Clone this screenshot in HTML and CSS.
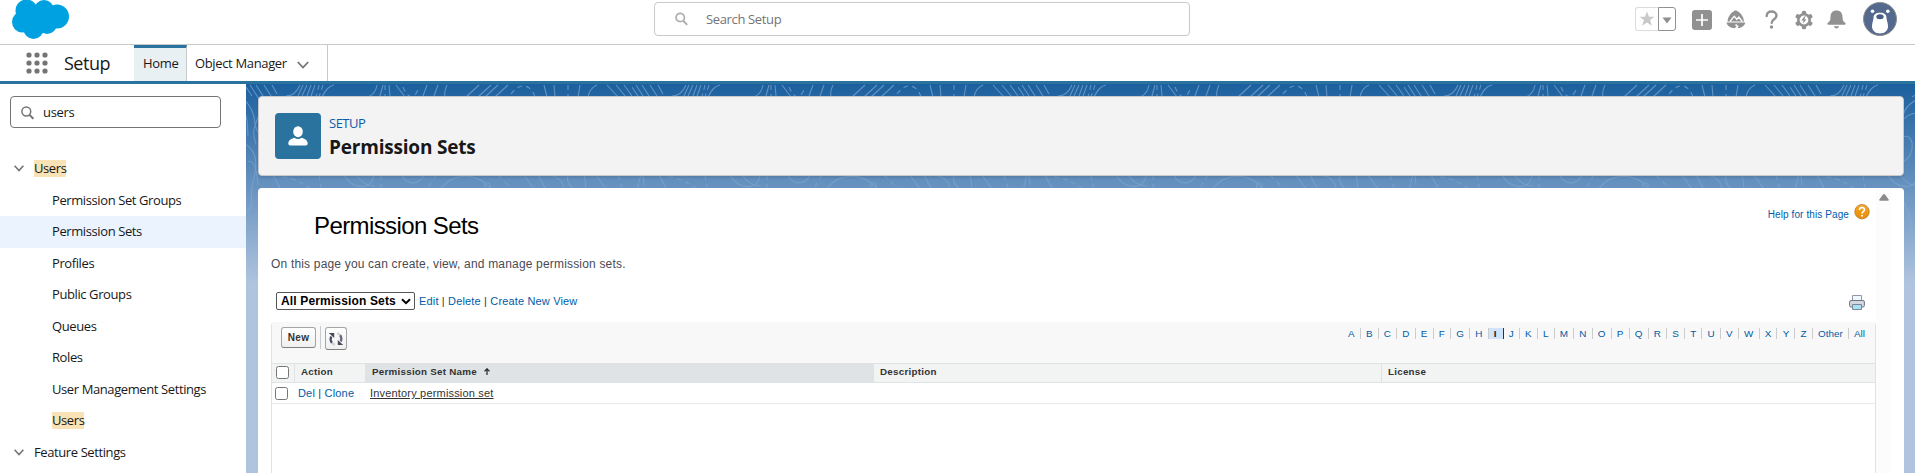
FILE: index.html
```html
<!DOCTYPE html>
<html lang="en">
<head>
<meta charset="utf-8">
<title>Permission Sets | Setup</title>
<link rel="stylesheet" href="styles.css">
</head>
<body>
<header class="top">
  <svg class="logo" width="60" height="40" viewBox="0 0 60 40" fill="#00a1e0"><circle cx="14.500" cy="10.500" r="11"/><circle cx="32" cy="10" r="10"/><circle cx="45" cy="16.500" r="12"/><circle cx="10.500" cy="22" r="10.500"/><circle cx="21.500" cy="29" r="10"/><circle cx="35" cy="24" r="10"/><path d="M10 8h30v20H14z"/></svg>
  <div class="global-search">
    <svg width="13" height="14" viewBox="0 0 13 14" fill="none" stroke="#aeaeae" stroke-width="1.700"><circle cx="5.200" cy="5.500" r="4.200"/><path d="M8.200 8.700l4 4.200" stroke-width="2"/></svg>
    <span>Search Setup</span>
  </div>
  <div class="actions">
    <div class="fav">
      <span class="fav-star"><svg width="16" height="16" viewBox="0 0 16 16" fill="#c9c9c9"><path d="M8 .5l2 5.200h5.500l-4.400 3.400 1.700 5.600L8 11.400l-4.800 3.300 1.700-5.600L.5 5.700H6z"/></svg></span>
      <span class="fav-menu"><svg width="10" height="7" viewBox="0 0 10 7" fill="#8f8f8f"><path d="M.5.500h9L5 6.500z"/></svg></span>
    </div>
    <svg class="i-add" width="20" height="20" viewBox="0 0 20 20"><rect width="20" height="20" rx="3" fill="#919191"/><path d="M10 4v12M4 10h12" stroke="#fff" stroke-width="1.700"/></svg>
    <svg class="i-trail" width="20" height="19" viewBox="0 0 20 19"><path d="M1.500 11.500C2 6 5.500 2 9.700.3c4.200 1.700 7.800 5.700 8.300 11.200z" fill="#919191"/><path d="M4 11.500l4.300-5.300 2.500 3.200 2-2.300 3.500 4.400" fill="none" stroke="#fff" stroke-width="1.300"/><path d="M.5 12.500h18.800c-.5 3.500-4 5.500-7.800 5.700l1.200-2.200-2.300-1.200 1.200-1.400-3 1.700 2 1.200-1.800 2C4.500 18 1 15.800.5 12.500z" fill="#919191"/></svg>
    <svg class="i-help" width="13" height="19" viewBox="0 0 13 19"><path d="M1.700 6C1.700 3 3.700 1.500 6.500 1.500s5 1.600 5 4.300c0 3.200-4.800 3.700-4.800 6.900" fill="none" stroke="#919191" stroke-width="2.400" stroke-linecap="round"/><circle cx="6.500" cy="17" r="1.700" fill="#919191"/></svg>
    <svg class="i-gear" width="18" height="20" viewBox="0 0 18 20"><g fill="#919191"><circle cx="9" cy="10" r="7"/><rect x="6.900" y=".8" width="4.200" height="18.400" rx="1.500"/><rect x="6.900" y=".8" width="4.200" height="18.400" rx="1.500" transform="rotate(60 9 10)"/><rect x="6.900" y=".8" width="4.200" height="18.400" rx="1.500" transform="rotate(120 9 10)"/></g><circle cx="9" cy="10" r="4.400" fill="#fff"/><path d="M9.500 6.200L6.300 10.500h2.200l-.6 3.300 3.500-4.500H9.200l1.500-3.100z" fill="#919191"/></svg>
    <svg class="i-bell" width="19" height="19" viewBox="0 0 19 19" fill="#919191"><path d="M9.500.5c3.900 0 6 2.700 6 6.200 0 3.300.6 4.700 2.600 6 .9.700.6 2-.4 2H1.300c-1 0-1.300-1.300-.4-2 2-1.300 2.600-2.700 2.600-6C3.500 3.200 5.600.5 9.500.5z"/><path d="M7 16.200h5c-.2 1.300-1.300 2.200-2.500 2.200S7.200 17.500 7 16.200z"/></svg>
    <svg class="i-user" width="34" height="34" viewBox="0 0 34 34"><circle cx="17" cy="17" r="16.500" fill="#54698d" stroke="#8d8d8f"/><circle cx="9.500" cy="9.300" r="1.800" fill="#fff"/><circle cx="24.800" cy="9.300" r="1.800" fill="#fff"/><path d="M17 10.800c4.500 0 6.500 2 6.500 5 0 3 1.500 5 1.500 8.500 0 4.700-3.500 7.200-8 7.200s-8-2.500-8-7.200c0-3.500 1.500-5.500 1.500-8.500 0-3 2-5 6.500-5z" fill="#fff"/><ellipse cx="17" cy="14.700" rx="3.700" ry="2.500" fill="#4a5f86"/></svg>
  </div>
</header>
<nav class="nav">
  <svg class="waffle" width="22" height="22" viewBox="0 0 22 22" fill="#747474"><circle cx="3" cy="3" r="2.600"/><circle cx="11" cy="3" r="2.600"/><circle cx="19" cy="3" r="2.600"/><circle cx="3" cy="11" r="2.600"/><circle cx="11" cy="11" r="2.600"/><circle cx="19" cy="11" r="2.600"/><circle cx="3" cy="19" r="2.600"/><circle cx="11" cy="19" r="2.600"/><circle cx="19" cy="19" r="2.600"/></svg>
  <span class="app">Setup</span>
  <a class="tab tab-on">Home</a>
  <a class="tab tab-om"><span>Object Manager</span><svg width="12" height="8" viewBox="0 0 12 8" fill="none" stroke="#747474" stroke-width="1.800"><path d="M.8 1L6 6.500 11.200 1"/></svg></a>
</nav>
<div class="body">
  <aside class="side">
    <div class="quick"><svg width="13" height="14" viewBox="0 0 13 14" fill="none" stroke="#747474" stroke-width="1.500"><circle cx="5.300" cy="5.500" r="4.400"/><path d="M8.500 8.900l3.900 4" stroke-width="2"/></svg><span>users</span></div>
    <ul class="tree">
      <li class="parent"><svg width="10" height="7" viewBox="0 0 10 7" fill="none" stroke="#747474" stroke-width="1.600"><path d="M.6.800L5 5.500 9.400.8"/></svg><mark>Users</mark></li>
      <li>Permission Set Groups</li>
      <li class="on">Permission Sets</li>
      <li>Profiles</li>
      <li>Public Groups</li>
      <li>Queues</li>
      <li>Roles</li>
      <li>User Management Settings</li>
      <li><mark class="leaf">Users</mark></li>
      <li class="parent"><svg width="10" height="7" viewBox="0 0 10 7" fill="none" stroke="#747474" stroke-width="1.600"><path d="M.6.800L5 5.500 9.400.8"/></svg><span>Feature Settings</span></li>
    </ul>
  </aside>
  <main class="main">
    <svg class="topo" width="1669" height="200">
      <defs>
        <linearGradient id="fade" x1="0" y1="0" x2="0" y2="1"><stop offset="0" stop-color="#fff" stop-opacity="1"/><stop offset="1" stop-color="#fff" stop-opacity=".35"/></linearGradient>
        <pattern id="lines" width="386" height="200" patternUnits="userSpaceOnUse">
          <g fill="none" stroke="#8db4dc" stroke-opacity=".6" stroke-width="1.100">
            <path d="M0 3l6 9M4 1l9 14M10 1l9 14M18 1l7 11M26 1l5 9M54 1c-3 7-8 11-14 11M57 1l-5 11M61 1l-5 11M65 1l-4 11M69 1l-4 11M88 1C82 2 79 7 76 13M131 1c-1 6-4 10-9 12M137 1l-3 11M143 1l1 11M150 1l9 12M181 1l-4 11M192 1l-4 11M201 1c-2 4-3 8-2 12M233 1l-13 12M245 1l-13 12M252 1l-13 12M262 1l-13 12M298 1l3 12M308 1l1 12M334 1l-2 12M351 1c-5 2-8 7-9 12M361 1l11 12M370 1l10 12M378 1l8 11"/>
            <path stroke-dasharray="5 4" d="M73 1l-3 12M77 1l-4 12M139 1v12M157 3c6 14 12 12 16 0M265 10c10-13 20-9 24 3M322 1v12"/>
            <path d="M-2 15c7 8 10 14 11 24s5 9 6 18M-2 28c5 7 3 14 4 24M14 29c-5 12-9 18-4 31M-1 60c12 6 13 20 8 38s4 23-8 31M2 77c8 0 9 13 10 24M0 142c12 0 13 19 0 26M2 181c7 2 9 9 10 14"/>
            <path d="M27 91l7 13M98 91c7 14 28 17 30 0M156 91c4 10 17 11 22 0M195 104c13-16 37-15 49 0M200 91c12-3 29 2 34 5M239 104c-3-7 7-7 5 0M278 91l10 14M292 91l7 13M304 91c9 2 13 7 14 13M322 91c-2 7 2 10 5 14M338 91c2 7 1 10 2 14M350 91l10 14"/>
            <path stroke-dasharray="5 4" d="M36 93c12 1 16 4 28 11M73 91l2 13M135 91v13M190 91l-8 13M252 91l13 13M372 91l4 13"/>
            <path d="M130 14c-11 5-16 11-17 18M126 29c-7 1-12 5-15 9M112 53c8-3 11 4 10 12s-8 14-12 13M111 92c5 7 10 10 18 10M113 115c5 16 11 25 9 40s-10 12-14 20M112 185c3-6 10-6 14-2"/>
          </g>
        </pattern>
        <mask id="m"><rect width="1669" height="200" fill="url(#fade)"/></mask>
      </defs>
      <rect width="1669" height="200" fill="url(#lines)" mask="url(#m)"/>
    </svg>
    <section class="card head">
      <span class="avatar"><svg width="20" height="20" viewBox="0 0 20 20" fill="#fff"><ellipse cx="10" cy="5.700" rx="4.800" ry="5.500"/><path d="M.3 17.500C.3 14 4 12.400 6.500 11.700c2 1.700 5 1.700 7 0 2.500.7 6.200 2.300 6.200 5.800 0 1.300-.8 2-2 2H2.300c-1.200 0-2-.7-2-2z"/></svg></span>
      <div class="titles"><span class="eyebrow">SETUP</span><h1>Permission Sets</h1></div>
    </section>
    <section class="card content">
      <div class="frame">
        <div class="title-row">
          <h2>Permission Sets</h2>
          <a class="help"><span>Help for this Page</span><svg width="16" height="16" viewBox="0 0 16 16"><defs><linearGradient id="og" x1="0" y1="0" x2="0" y2="1"><stop offset="0" stop-color="#f0b040"/><stop offset=".45" stop-color="#ee9b12"/><stop offset="1" stop-color="#e88a08"/></linearGradient></defs><circle cx="8" cy="7.700" r="7.200" fill="url(#og)" stroke="#b97a25" stroke-width=".8"/><path d="M5.500 6c0-3.300 5-3.300 5-.3 0 1.800-2.500 1.900-2.500 3.800" fill="none" stroke="#fff" stroke-width="1.600"/><circle cx="8" cy="11.700" r="1" fill="#fff"/></svg></a>
        </div>
        <p class="intro">On this page you can create, view, and manage permission sets.</p>
        <div class="views">
          <div class="select"><span>All Permission Sets</span><svg width="10" height="7" viewBox="0 0 10 7" fill="none" stroke="#000" stroke-width="2"><path d="M1 1.200l4 4 4-4"/></svg></div>
          <span class="links"><a>Edit</a> | <a>Delete</a> | <a>Create New View</a></span>
          <svg class="print" width="16" height="15" viewBox="0 0 16 15"><path d="M3.500 5.500v-5h9v5" fill="#eef9fd" stroke="#8e98a8"/><rect x=".6" y="5.500" width="14.800" height="6.500" rx="1.500" fill="#d5d7de" stroke="#6f7480"/><path d="M3.500 9.500h9v5h-9z" fill="#a9e0f4" stroke="#7a8596"/></svg>
        </div>
        <div class="list">
          <div class="tools">
            <span class="btn new">New</span><i class="sep"></i>
            <span class="btn refresh"><svg width="16" height="14" viewBox="0 0 16 14" fill="none" stroke-width="2.200"><path d="M3.200 4.500C2.300 6.500 2.500 9 4 11" stroke="#4a4a5c"/><path d="M12.800 9.500c.9-2 .7-4.500-.8-6.500" stroke="#6a6a78"/><path d="M4 11c.8.900 1.800 1.400 3 1.600M12 3c-.8-.9-1.800-1.400-3-1.600" stroke="#d2d2d6"/><path d="M.8 1h5.400v5zM15.200 13H9.800V8z" fill="#4a4a5c"/></svg></span>
            <div class="rolodex"><a>A</a><a>B</a><a>C</a><a>D</a><a>E</a><a>F</a><a>G</a><a>H</a><a class="cur">I</a><a>J</a><a>K</a><a>L</a><a>M</a><a>N</a><a>O</a><a>P</a><a>Q</a><a>R</a><a>S</a><a>T</a><a>U</a><a>V</a><a>W</a><a>X</a><a>Y</a><a>Z</a><a>Other</a><a>All</a></div>
          </div>
          <div class="row th"><span class="c1"><i class="box"></i></span><span class="act">Action</span><span class="sorted">Permission Set Name<svg width="6" height="7" viewBox="0 0 6 7" fill="none" stroke="#222" stroke-width="1.200"><path d="M3 7V1M.5 3.300L3 .8l2.500 2.500"/></svg></span><span class="desc">Description</span><span class="lic">License</span></div>
          <div class="row td"><span class="c1"><i class="box"></i></span><span class="act"><a>Del</a> | <a>Clone</a></span><span class="name"><u>Inventory permission set</u></span></div>
        </div>
      </div>
      <div class="scroll"><svg width="10" height="7" viewBox="0 0 10 7" fill="#8b8b8b"><path d="M4 .5q1-1 2 0l3.700 5q.5 1.300-1 1.300H1.300q-1.500 0-1-1.300z"/></svg></div>
    </section>
  </main>
</div>
</body>
</html>
```
FILE: styles.css
```css
* { box-sizing: border-box; }
body { margin: 0; height: 473px; overflow: hidden; background: #fff; color: #181818; font: 13px/18px "Open Sans", "Noto Sans", sans-serif; display: flex; flex-direction: column; }
svg { display: block; flex: none; }
.top { height: 45px; flex: none; border-bottom: 1px solid #c9c9c9; display: flex; align-items: flex-start; }
.logo { margin-left: 12px; margin-right: 582px; }
.global-search { width: 536px; height: 34px; margin-top: 2px; border: 1px solid #c9c9c9; border-radius: 4px; display: flex; align-items: center; padding-left: 20px; gap: 18px; color: #747474; letter-spacing: -.35px; }
.actions { margin-left: 445px; display: flex; align-items: flex-start; }
.fav { display: flex; width: 41px; height: 24px; margin-top: 7px; }
.fav span { display: flex; align-items: center; justify-content: center; }
.fav-star { width: 23px; border: 1px solid #dcdcdc; border-right: 0; border-radius: 3px 0 0 3px; }
.fav-menu { width: 18px; border: 1px solid #919191; border-radius: 0 3px 3px 0; padding-top: 3px; }
.i-add { margin: 10px 0 0 16px; }
.i-trail { margin: 10px 0 0 14px; }
.i-help { margin: 10px 0 0 19px; }
.i-gear { margin: 10px 0 0 17px; }
.i-bell { margin: 10px 0 0 14px; }
.i-user { margin: 2px 0 0 17px; }
.nav { height: 39px; flex: none; border-bottom: 3px solid #2a739e; display: flex; align-items: stretch; }
.waffle { margin: 7px 0 0 25.500px; }
.app { width: 70px; margin-left: 16.500px; font-size: 18px; line-height: 36px; letter-spacing: -.5px; }
.app, .tab { white-space: nowrap; }
.tab { line-height: 37px; letter-spacing: -.35px; }
.tab-on { width: 53px; background: #e9f0f4; border-top: 3px solid #2a739e; border-right: 1px solid #c9c9c9; padding-left: 9px; line-height: 31px; }
.tab-om { width: 141px; border-right: 1px solid #c9c9c9; display: flex; align-items: center; justify-content: space-between; padding: 0 18px 0 8px; }
.tab-om svg { margin-top: 3px; }
.body { flex: 1; display: flex; min-height: 0; }
.side { width: 246px; flex: none; padding-top: 12px; }
.quick { width: 211px; height: 32px; margin-left: 10px; border: 1px solid #747474; border-radius: 4px; display: flex; align-items: center; gap: 9px; padding-left: 10px; letter-spacing: -.3px; }
.quick svg { margin-top: 2px; }
.tree { list-style: none; margin: 25px 0 0; padding: 0; letter-spacing: -.4px; }
.tree li { height: 31.500px; line-height: 31px; padding-left: 52px; white-space: nowrap; }
.tree .parent { display: flex; align-items: center; padding-left: 14px; gap: 10px; }
.tree .on { background: #eaf3fe; }
.tree mark { display: inline-block; height: 17px; line-height: 17px; background: #f9e3b6; color: inherit; vertical-align: middle; }
.tree .leaf { margin-bottom: 2px; }
.main { flex: 1; position: relative; min-width: 0; padding: 12px 11px 0 12px; display: flex; flex-direction: column; gap: 12px; background: linear-gradient(#1b5f9e, #b0c4df 200px); }
.topo { position: absolute; left: 0; top: 0; }
.card { position: relative; border: 1px solid #c9c9c9; border-radius: 4px; }
.head { height: 80px; flex: none; background: #f3f3f3; box-shadow: 0 2px 2px rgba(0,0,0,.1); display: flex; padding: 16px; gap: 8px; }
.avatar { width: 46px; height: 46px; border-radius: 4px; background: #2a739e; display: flex; align-items: center; justify-content: center; }
.titles { display: flex; flex-direction: column; }
.eyebrow { line-height: 20px; color: #0b5cab; letter-spacing: -.5px; }
h1 { margin: 3px 0 0; font-size: 19px; line-height: 23px; letter-spacing: -.2px; }
.content { flex: 1; background: #fff; border: 0; border-radius: 4px 4px 0 0; display: flex; padding-left: 13px; font-family: "Liberation Sans", Arial, sans-serif; }
.content a { color: #015ba7; }
.frame { width: 1605px; display: flex; flex-direction: column; }
.title-row { height: 56px; display: flex; justify-content: space-between; }
h2 { margin: 24px 0 0 43px; font-size: 24px; line-height: 28px; font-weight: 400; color: #000; letter-spacing: -.6px; }
.help { display: flex; gap: 5px; height: 16px; margin: 16px 6px 0 0; font-size: 10px; letter-spacing: .1px; }
.help span { line-height: 21px; }
.intro { margin: 11px 0 0; font-size: 12px; line-height: 18px; color: #4a4a56; letter-spacing: .18px; }
.views { display: flex; height: 18px; margin: 19px 0 12px 5px; align-items: center; font-size: 11px; color: #333; }
.select { width: 139px; height: 18px; border: 1px solid #555; border-radius: 2px; display: flex; align-items: center; justify-content: space-between; padding: 0 3px 0 4px; font-size: 12px; font-weight: 700; color: #000; white-space: nowrap; letter-spacing: .15px; }
.links { margin-left: 4px; letter-spacing: .16px; }
.print { margin: 2px 11px 0 auto; }
.list { flex: 1; border: 1px solid #e0e3e5; border-width: 0 1px; border-radius: 4px 4px 0 0; }
.tools { height: 41px; background: #f8f8f8; border-radius: 4px 4px 0 0; display: flex; align-items: flex-start; padding: 5px 8px 0 9px; }
.btn { border: 1px solid #a5a5a5; border-bottom-color: #7f7f7f; border-radius: 3px; background: linear-gradient(#fff, #f0f0f0); }
.new { width: 35px; height: 21px; font-size: 10px; font-weight: 700; line-height: 20px; text-align: center; color: #333; letter-spacing: .3px; }
.sep { width: 1px; height: 23px; margin: -1px 4px 0 4px; background: #c7ccce; }
.refresh { width: 22px; height: 23px; display: flex; align-items: center; justify-content: center; }
.rolodex { margin-left: auto; display: flex; font-size: 9.900px; line-height: 11px; margin-top: 1px; }
.rolodex a { padding: 0 5.180px; border-right: 1px solid #ccc; }
.rolodex a:last-child { border: 0; padding-right: 2px; }
.rolodex .cur { width: 15px; background: #cfe3fa; border-right-color: #333; color: #222; font-weight: 700; }
.row { display: flex; }
.th { height: 20px; background: #f2f3f3; border-top: 1px solid #e0e3e5; border-bottom: 1px solid #e0e3e5; font-size: 9.800px; font-weight: 700; line-height: 16px; color: #333; }
.c1 { width: 22px; padding: 2px 0 0 4px; }
.box { display: block; width: 13px; height: 13px; border: 1px solid #767676; border-radius: 2.500px; background: #fff; }
.th .act { width: 71px; padding-left: 6px; border-left: 1px solid #e0e3e5; }
.sorted { width: 508px; padding-left: 7px; background: #dfe3e6; display: flex; gap: 7px; }
.sorted svg { margin-top: 4px; }
.th .desc { width: 508px; padding-left: 6px; border-left: 1px solid #e0e3e5; }
.th .lic { padding-left: 6px; border-left: 1px solid #e0e3e5; }
.th span { letter-spacing: .25px; }
.td { height: 21px; border-bottom: 1px solid #e8eaeb; font-size: 11px; line-height: 21px; color: #333; letter-spacing: .18px; }
.td .c1 { width: 23px; padding: 4px 0 0 3px; }
.td .act { width: 75px; padding-left: 3px; }
.scroll { width: 15px; background: #fcfcfc; padding: 6px 0 0 3px; }
```
